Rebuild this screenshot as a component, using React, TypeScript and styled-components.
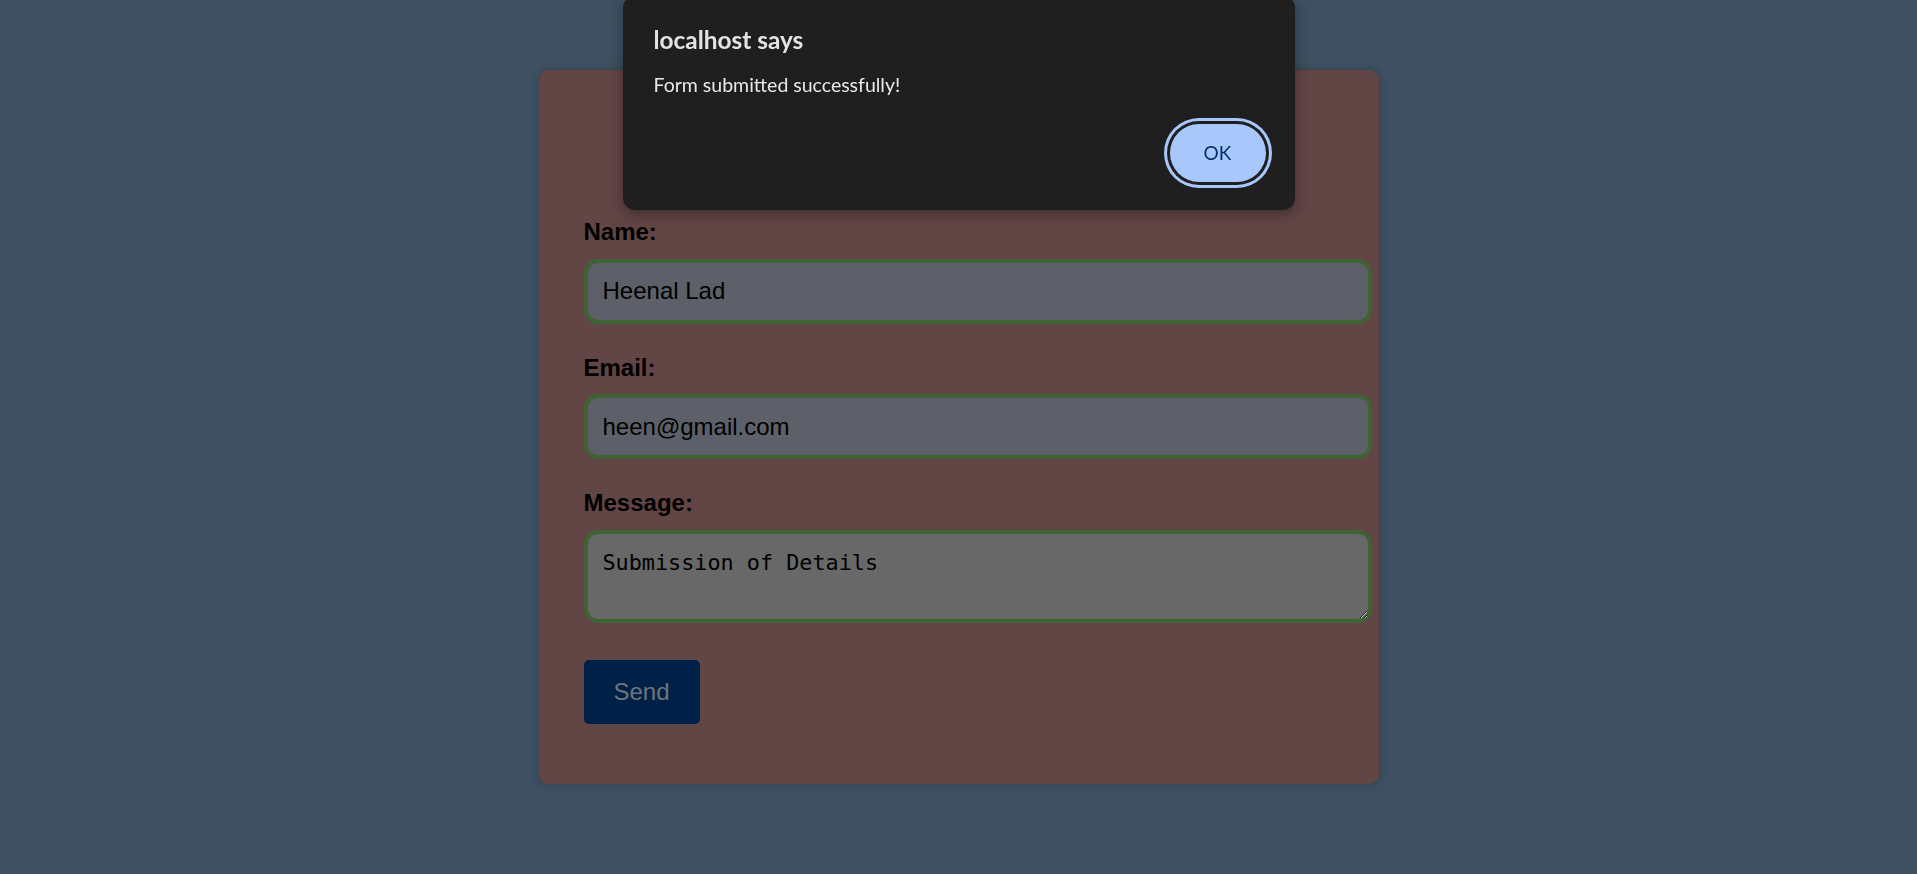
import React from "react";
import styled, { createGlobalStyle } from "styled-components";

const GlobalStyle = createGlobalStyle`
  html, body {
    margin: 0;
    padding: 0;
    background: #3e5061;
    font-family: "Liberation Sans", Arial, sans-serif;
    overflow: hidden;
  }
  * { box-sizing: border-box; }
`;

const Page = styled.main`
  min-height: 100vh;
  display: flex;
  justify-content: center;
  align-items: flex-start;
  padding-top: 70px;
`;

const Card = styled.form`
  width: 840px;
  padding: 45px 45px 60px;
  background: #624545;
  border-radius: 10px;
  box-shadow: 0 0 10px rgba(0, 0, 0, 0.2);
  display: flex;
  flex-direction: column;
  align-items: flex-start;
`;

const Heading = styled.h2`
  align-self: center;
  margin: 0 0 63px;
  font-size: 32px;
  line-height: 40px;
  color: #000;
`;

const Label = styled.label`
  display: block;
  font-size: 24px;
  line-height: 28px;
  font-weight: 700;
  color: #000;
  margin-bottom: 12.5px;
`;

const fieldBase = `
  box-sizing: content-box;
  width: 100%;
  padding: 15px;
  border: 4px solid #3f6334;
  border-radius: 14px;
  color: #000;
  outline: none;
  margin: 0;
`;

const TextInput = styled.input`
  ${fieldBase}
  display: block;
  height: 27px;
  background: #5d6069;
  font-family: "Liberation Sans", Arial, sans-serif;
  font-size: 24px;
  margin-bottom: 30px;
`;

const TextArea = styled.textarea`
  ${fieldBase}
  display: block;
  background: #686868;
  font-family: "DejaVu Sans Mono", "Liberation Mono", monospace;
  font-size: 21.8px;
  line-height: 25px;
  padding-top: 16px;
  height: 54px;
  resize: both;
`;

const SendButton = styled.button`
  margin-top: 37px;
  width: 116px;
  height: 64px;
  border: none;
  border-radius: 5px;
  background: #002147;
  color: #70757b;
  font-family: "Liberation Sans", Arial, sans-serif;
  font-size: 24px;
  cursor: pointer;
`;

const Dialog = styled.div`
  position: fixed;
  top: -4px;
  left: 50%;
  transform: translateX(-50%);
  width: 672px;
  height: 214px;
  background: #1f1f1f;
  border-radius: 12px;
  box-shadow: 0 4px 14px rgba(0, 0, 0, 0.35);
  padding: 29.4px 29px 0 31px;
  display: flex;
  flex-direction: column;
  font-family: Lato, "Noto Sans", sans-serif;
`;

const DialogTitle = styled.div`
  font-size: 24.4px;
  line-height: 30px;
  font-weight: 700;
  color: #e3e3e3;
`;

const DialogMessage = styled.div`
  margin-top: 17px;
  font-size: 19.5px;
  line-height: 26px;
  color: #e8e8e8;
`;

const DialogFooter = styled.div`
  margin-top: 25.5px;
  display: flex;
  justify-content: flex-end;
`;

const OkButton = styled.button`
  width: 96px;
  height: 58px;
  border: none;
  border-radius: 29px;
  background: #a8c7fa;
  color: #062e6f;
  font-family: Lato, "Noto Sans", sans-serif;
  font-size: 19px;
  box-shadow: 0 0 0 3px #1f1f1f, 0 0 0 6px #a8c7fa;
  cursor: pointer;
`;

export default function App() {
  return (
    <>
      <GlobalStyle />
      <Page>
        <Card onSubmit={(e) => e.preventDefault()}>
          <Heading>Contact Us</Heading>
          <Label htmlFor="name">Name:</Label>
          <TextInput id="name" type="text" defaultValue="Heenal Lad" />
          <Label htmlFor="email">Email:</Label>
          <TextInput id="email" type="email" defaultValue="heen@gmail.com" />
          <Label htmlFor="message">Message:</Label>
          <TextArea id="message" defaultValue="Submission of Details" />
          <SendButton type="submit">Send</SendButton>
        </Card>
      </Page>
      <Dialog role="alertdialog">
        <DialogTitle>localhost says</DialogTitle>
        <DialogMessage>Form submitted successfully!</DialogMessage>
        <DialogFooter>
          <OkButton type="button">OK</OkButton>
        </DialogFooter>
      </Dialog>
    </>
  );
}
